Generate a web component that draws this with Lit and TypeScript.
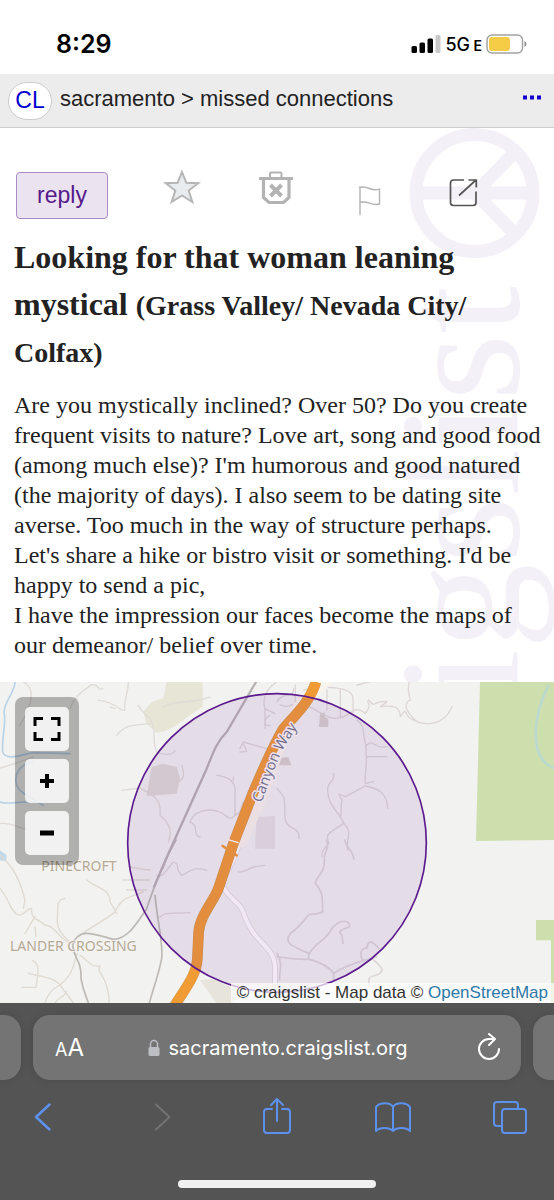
import { LitElement, html, css } from "lit";
import { customElement } from "lit/decorators.js";

@customElement("status-bar")
class StatusBar extends LitElement {
  static styles = css`
    :host {
      display: flex;
      align-items: center;
      justify-content: space-between;
      box-sizing: border-box;
      height: 74px;
      padding: 14px 27px 0 56px;
      background: #fff;
      color: #000;
      font-family: Inter, "Liberation Sans", sans-serif;
    }
    .time { font-size: 25px; font-weight: 600; }
    .right { display: flex; align-items: center; gap: 4px; }
    .network { font-size: 18px; font-weight: 500; }
    .small { font-size: 14px; font-weight: 600; }
    svg { display: block; }
  `;
  render() {
    return html`
      <span class="time">8:29</span>
      <div class="right">
        <svg width="30" height="20" viewBox="0 0 30 20" aria-hidden="true">
          <rect x="0.500" y="12" width="5.500" height="7" rx="1.500" />
          <rect x="8.500" y="8.500" width="5.500" height="10.500" rx="1.500" />
          <rect x="16.500" y="4.500" width="5.500" height="14.500" rx="1.500" />
          <rect x="24.500" y="1" width="5" height="18" rx="1.500" fill="#c8c8c8" />
        </svg>
        <span class="network">5G<span class="small"> E</span></span>
        <svg width="41" height="20" viewBox="0 0 41 20" aria-hidden="true">
          <rect x="1" y="1" width="35.500" height="18" rx="5" fill="none" stroke="#a3a3a3" stroke-width="1.500" />
          <rect x="3" y="3" width="21" height="14" rx="3" fill="#f5cc45" />
          <path d="M38.500 7v6q2-1 2-3t-2-3z" fill="#8c8c8c" />
        </svg>
      </div>
    `;
  }
}

@customElement("site-header")
class SiteHeader extends LitElement {
  static styles = css`
    :host {
      display: flex;
      align-items: center;
      box-sizing: border-box;
      height: 54px;
      padding: 0 13px 0 8px;
      border-bottom: 1px solid #ccc;
      background: #ececec;
      font-family: "Liberation Sans", Arial, sans-serif;
      color: #222;
    }
    .logo {
      display: flex;
      align-items: center;
      justify-content: center;
      box-sizing: border-box;
      width: 44px;
      height: 38px;
      border: 1px solid #ccc;
      border-radius: 20px;
      background: #fff;
      color: #0000d0;
      font-size: 23px;
      text-decoration: none;
    }
    .crumbs { flex: 1; margin: 0 0 4px 8px; font-size: 22px; }
    .menu { padding: 0 0 2px; border: 0; background: none; }
    svg { display: block; }
  `;
  render() {
    return html`
      <a class="logo" href="#home">CL</a>
      <nav class="crumbs">sacramento &gt; missed connections</nav>
      <button class="menu" aria-label="more">
        <svg width="18" height="12" viewBox="0 0 18 12" fill="#1400cf">
          <path d="M0 1.500h4v4H0zM7 1.500h4v4H7zM14 1.500h4v4h-4z" />
        </svg>
      </button>
    `;
  }
}

@customElement("listing-post")
class ListingPost extends LitElement {
  static styles = css`
    :host {
      display: block;
      position: relative;
      overflow: hidden;
      padding: 40px 10px 22px 14px;
      background: #fff;
      color: #222;
      font-family: "Liberation Serif", "Times New Roman", serif;
    }
    .watermark { position: absolute; top: 0; right: 0; }
    .mark { font-family: "Liberation Serif", serif; font-size: 172px; }
    .body { position: relative; }
    .actions { display: flex; align-items: flex-start; padding: 0 34px 0 2px; }
    .reply {
      box-sizing: border-box;
      width: 92px;
      height: 47px;
      margin: 4px 27px 0 0;
      padding: 0;
      border: 1px solid #a98bc7;
      border-radius: 4px;
      background: #ebe3ef;
      color: #551a8b;
      font: 23px "Liberation Sans", Arial, sans-serif;
    }
    .icons { flex: 1; display: grid; grid-template-columns: repeat(4, 1fr); justify-items: center; }
    .icon { padding: 0; border: 0; background: none; }
    svg { display: block; }
    h1 { margin: 15px 0 0; font-size: 32px; line-height: 47px; font-weight: 700; }
    .place { font-size: 28px; line-height: 28px; }
    p { margin: 15px 0 0; font-size: 24px; line-height: 30px; }
  `;
  render() {
    return html`
      <svg class="watermark" width="150" height="554" viewBox="404 128 150 554" fill="#f3f0f7" aria-hidden="true">
        <g fill="none" stroke="#f3f0f7" stroke-width="13">
          <circle cx="474.500" cy="193" r="58.500" />
          <path d="M416 193h117M475 193l40-41M475 193l40 41" />
        </g>
        <text class="mark" text-anchor="end" transform="translate(518 286) rotate(-90)">craigslist</text>
      </svg>
      <div class="body">
        <div class="actions">
          <button class="reply">reply</button>
          <div class="icons">
            <button class="icon" aria-label="favorite">
              <svg width="48" height="48" viewBox="0 0 48 48" fill="#e9ecef" stroke="#b6b6b6" stroke-width="2">
                <path d="M24 4l4.300 10.700 12 .500-9.600 7.300 3.600 11.500-10.300-6.500-10.300 6.500 3.600-11.500-9.600-7.300 12-.500z" />
              </svg>
            </button>
            <button class="icon" aria-label="hide">
              <svg width="48" height="48" viewBox="0 0 48 48" fill="none" stroke="#b3b3b3">
                <path d="M7 10.500h34" stroke-width="3" />
                <path d="M18 9V5.500q0-1 1-1h9.500q1 0 1 1V9" stroke-width="2" />
                <path d="M11.500 11v18.500l5.500 5h14.500l5.500-5V11" stroke-width="3.200" />
                <path d="M18.500 17l11 11m0-11l-11 11" stroke-width="4" />
              </svg>
            </button>
            <button class="icon" aria-label="flag">
              <svg width="48" height="48" viewBox="0 0 48 48" fill="none" stroke="#b3b3b3" stroke-width="1.400">
                <path d="M15 18.500V47M14 19.500c4-1.200 7-.500 10.500 1s6.500 1.700 10 .700V36c-3.500 1-6.500.500-10-.800s-6-1.700-9.500-.700" />
              </svg>
            </button>
            <button class="icon" aria-label="share">
              <svg width="48" height="48" viewBox="0 0 48 48" fill="none" stroke="#555" stroke-width="1.700">
                <path d="M25 12H14.500a3 3 0 0 0-3 3v19.500a3 3 0 0 0 3 3H34a3 3 0 0 0 3-3V23.500M20 27.500L37 12M29.500 12H37.300V19.500" />
              </svg>
            </button>
          </div>
        </div>
        <h1>Looking for that woman leaning mystical <span class="place">(Grass Valley/ Nevada City/ Colfax)</span></h1>
        <p>
          Are you mystically inclined? Over 50? Do you create frequent visits to nature? Love art, song and good food
          (among much else)? I'm humorous and good natured (the majority of days). I also seem to be dating site
          averse. Too much in the way of structure perhaps.<br />
          Let's share a hike or bistro visit or something. I'd be happy to send a pic,<br />
          I have the impression our faces become the maps of our demeanor/ belief over time.
        </p>
      </div>
    `;
  }
}

@customElement("area-map")
class AreaMap extends LitElement {
  static styles = css`
    :host {
      display: block;
      position: relative;
      overflow: hidden;
      background: #f2f2f0;
      font-family: "Liberation Sans", Arial, sans-serif;
    }
    .canvas { display: block; width: 100%; height: 321px; }
    .place { font: 42px "Noto Sans", sans-serif; fill: #b3a994; paint-order: stroke; stroke: #f6f5f2; stroke-width: 5px; }
    .street { font: 44px "Noto Sans", sans-serif; fill: #77708f; paint-order: stroke; stroke: #eee6f0; stroke-width: 8px; }
    .tools {
      position: absolute;
      top: 15px;
      left: 15px;
      display: grid;
      gap: 8px;
      padding: 10px;
      border-radius: 8px;
      background: rgba(0, 0, 0, 0.27);
    }
    .tool {
      display: flex;
      align-items: center;
      justify-content: center;
      width: 44px;
      height: 44px;
      padding: 0;
      border: 0;
      border-radius: 5px;
      background: rgba(255, 255, 255, 0.82);
    }
    .credit {
      position: absolute;
      right: 0;
      bottom: 0;
      padding: 0 6px;
      background: rgba(255, 255, 255, 0.7);
      color: #333;
      font-size: 17px;
      line-height: 20px;
      white-space: nowrap;
    }
    a { color: #2f79a8; text-decoration: none; }
  `;
  render() {
    return html`
      <svg class="canvas" viewBox="0 0 1662 963" preserveAspectRatio="xMidYMid slice" fill="none" stroke-linecap="round" stroke-linejoin="round" role="img" aria-label="map">
        <!-- parks and built-up areas -->
        <path d="M1440 0H1662V474L1428 477zM1608 714H1662V963H1653V775H1608z" fill="#cddfad" />
        <path d="M1645 12C1610 80 1600 150 1612 200C1622 235 1640 250 1662 258" stroke="#bcd9d0" stroke-width="8" />
        <path d="M500 0H608V75C560 100 520 150 470 152L440 125L430 90L455 60L490 48z" fill="#e6e5d6" />
        <path d="M455 255L490 245L530 255L540 290L530 335L440 342z" fill="#dfdbd7" />
        <path d="M770 405L825 402V500H765z" fill="#e6e3e1" />
        <path d="M960 92H975V105L985 110V135H957zM835 228L865 225L874 250H835z" fill="#d8d2cd" />
        <path d="M600 895L640 890L700 920V963H650z" fill="#e7e5db" />
        <path d="M0 505L20 520L18 538L0 535z" fill="#bfd8ea" />
        <!-- streams -->
        <g stroke="#b8d3ea" stroke-width="5">
          <path d="M45 0C45 30 15 55 12 90C20 120 5 160 8 210C20 240 70 215 100 212L210 215M100 240C60 245 45 275 48 300C50 330 90 345 130 370M0 360C30 370 70 355 110 360" />
        </g>
        <!-- minor roads, north west -->
        <g stroke="#dfdbd6" stroke-width="4">
          <path d="M70 0C110 20 95 70 60 130M0 258C50 245 80 230 100 225M0 425C30 420 60 440 75 440M210 80C220 50 240 30 275 8C300 5 290 30 308 20M385 0C385 30 370 60 375 85C360 90 350 60 295 55M345 80L330 75M350 160C380 125 400 130 450 125M415 70C430 100 450 100 455 120C470 150 455 180 470 210C490 220 520 220 525 205M490 75C530 50 560 70 630 45M365 325L420 318C460 340 485 350 480 400C505 420 520 445 505 480M545 250C560 290 540 300 530 300" />
        </g>
        <!-- minor roads, south west -->
        <g stroke="#dfdad2" stroke-width="4" transform="translate(0 474)">
          <path d="M0 45C40 80 60 120 75 180L70 205M0 145C30 180 30 215 55 225C80 225 75 205 95 205C90 240 120 240 135 255C170 260 170 290 210 310M105 230L75 280M105 260L108 290M195 175C165 180 175 210 172 240C170 270 190 290 210 305M260 120C290 145 330 145 330 185L350 220M210 310C250 270 320 240 345 215C370 165 390 175 430 155M440 150L380 150M232 340C215 390 220 400 180 435C150 450 140 470 135 489M85 400C120 410 160 410 180 435L220 489M65 442H108C115 400 120 370 98 362M165 489C175 470 185 480 200 455M240 345C270 370 275 380 300 378C285 400 325 400 328 489M370 120H450M385 80C410 85 440 90 450 90" />
        </g>
        <!-- minor roads inside and around the circle -->
        <g stroke="#dcd7d5" stroke-width="4">
          <path d="M830 0C800 20 785 50 795 80L825 95M795 80V140M720 200L730 180L800 200M720 210L740 208L730 185M650 280C690 285 710 300 705 340V400L720 390L730 360M700 295V285M705 400C690 420 680 400 660 390C620 375 580 390 570 420C600 430 575 460 600 465M810 100C790 110 790 135 810 130" />
          <path d="M470 580C490 590 500 560 520 540C545 550 520 555 545 580C570 570 580 550 620 565M490 560L495 545M480 705C500 690 490 695 570 692M715 570C730 575 750 550 795 550" />
        </g>
        <g stroke="#dcd7d6" stroke-width="4" transform="translate(831 -6)">
          <path d="M0 65C20 30 50 60 50 25M10 75C50 90 40 60 60 80M55 15V70M80 30C140 15 225 20 228 55V100M150 30V90M190 30V110M50 75C100 60 150 130 190 112C220 110 230 70 265 100C290 70 265 70 275 60C300 90 280 60 330 65L310 80C350 75 370 80 370 110C390 80 380 100 400 115C440 140 500 140 525 80M420 125C380 90 380 70 400 60C390 30 395 10 400 0M240 15L280 5M240 120C265 140 255 150 265 190C275 250 260 290 265 310L290 305M265 200C290 170 290 210 330 200M270 230H330M265 318L205 350L185 342L195 360C190 380 195 395 190 410M265 318C300 325 330 335 332 385M170 280C175 310 150 300 152 335C155 380 190 400 200 430C140 470 150 460 155 490C140 510 135 510 135 530M200 430C230 460 205 475 212 510M0 325C30 360 20 350 24 400C20 460 70 430 66 475" />
        </g>
        <g stroke="#dcd6da" stroke-width="5" transform="translate(831 474)">
          <path d="M148 0C160 30 140 30 142 60C145 100 115 110 115 130C140 160 135 170 137 215C120 225 100 220 95 225C80 240 70 260 40 280C20 310 40 315 95 340V358M95 345C110 310 150 300 165 265C190 235 220 240 218 260C190 270 180 275 195 285L198 310M0 350C30 355 50 360 98 358C140 370 160 385 170 400V420M170 400C200 380 230 370 260 362C240 340 260 320 270 325C275 290 290 310 305 325M260 362L300 350M285 355C310 380 330 390 300 405C275 410 270 415 280 440M203 0C210 30 230 30 230 58M0 340C20 370 5 400 8 420" />
        </g>
        <!-- local road, railway and motorway -->
        <path d="M718 480C700 560 665 575 668 615C700 665 720 655 735 705C765 790 830 790 825 870V910" stroke="#e2dce0" stroke-width="17" />
        <path d="M718 480C700 560 665 575 668 615C700 665 720 655 735 705C765 790 830 790 825 870V910" stroke="#fff" stroke-width="12" />
        <path d="M830 190L895 75L975 0M725 480L790 330L840 190" stroke="#faf5ec" stroke-width="34" />
        <path d="M528 474C490 540 460 620 440 680C400 740 380 770 340 772C290 760 235 730 218 790C220 830 245 830 243 890C250 930 260 945 265 963M465 640C475 740 490 780 485 830C475 880 460 920 448 963" stroke="#bdbab5" stroke-width="5" />
        <path d="M768 0L680 150C650 180 640 210 620 260L505 515L462 615" stroke="#b8b3b3" stroke-width="7" />
        <path d="M948 0C930 60 885 100 850 140C815 200 790 260 760 330L700 485L655 620C640 660 600 700 596 750L592 830C590 880 555 920 515 985" stroke="#cf9a55" stroke-width="32" stroke-linecap="butt" />
        <path d="M948 0C930 60 885 100 850 140C815 200 790 260 760 330L700 485L655 620C640 660 600 700 596 750L592 830C590 880 555 920 515 985" stroke="#f19b35" stroke-width="29" stroke-linecap="butt" />
        <path d="M668 492L710 520" stroke="#f19b35" stroke-width="8" />
        <path d="M684 473L715 482" stroke="#fff" stroke-width="4" />
        <!-- approximate location -->
        <circle cx="831" cy="483" r="448" fill="#702090" fill-opacity="0.1" stroke="#5b1a8e" stroke-width="5" />
        <text class="place" x="124" y="568">PINECROFT</text>
        <text class="place" x="30" y="808">LANDER CROSSING</text>
        <path id="street" d="M784 364C806 306 824 256 842 216C862 176 886 146 921 96" />
        <text class="street"><textPath href="#street">Canyon Way</textPath></text>
      </svg>
      <div class="tools">
        <button class="tool" aria-label="full screen">
          <svg width="28" height="24" viewBox="0 0 28 24" fill="none" stroke="#000" stroke-width="3">
            <path d="M2 9V1.500H10M18 1.500H26V9M26 15V22.500H18M10 22.500H2V15" />
          </svg>
        </button>
        <button class="tool" aria-label="zoom in">
          <svg width="14" height="14" viewBox="0 0 14 14" stroke="#000" stroke-width="4"><path d="M0 7H14M7 0V14" /></svg>
        </button>
        <button class="tool" aria-label="zoom out">
          <svg width="14" height="14" viewBox="0 0 14 14" stroke="#000" stroke-width="5"><path d="M0 7H14" /></svg>
        </button>
      </div>
      <div class="credit">© craigslist - Map data © <a href="#osm">OpenStreetMap</a></div>
    `;
  }
}

@customElement("browser-bar")
class BrowserBar extends LitElement {
  static styles = css`
    :host {
      display: flex;
      flex-direction: column;
      box-sizing: border-box;
      padding: 12px 0;
      background: #545454;
      font-family: Inter, "Liberation Sans", sans-serif;
    }
    .tabs { display: grid; grid-template-columns: 21px 1fr 21px; gap: 12px; height: 65px; }
    .side, .address { background: #747474; box-shadow: 0 0 8px rgba(0, 0, 0, 0.12); }
    .prev { border-radius: 0 17px 17px 0; }
    .next { border-radius: 17px 0 0 17px; }
    .address {
      display: flex;
      align-items: center;
      justify-content: space-between;
      padding: 0 20px 0 22px;
      border-radius: 17px;
    }
    button { padding: 0; border: 0; background: none; color: #fff; font-family: inherit; }
    .size { font-size: 18px; }
    .big { font-size: 24px; }
    .url { display: flex; align-items: center; gap: 9px; padding-right: 4px; font-size: 20px; }
    svg { display: block; }
    .toolbar { display: flex; justify-content: space-between; padding: 12px 24px 0 23px; }
    .toolbar svg { fill: none; stroke: #5c91ee; stroke-width: 2; stroke-linecap: round; stroke-linejoin: round; }
    .toolbar .off { stroke: #737373; }
    .home { width: 198px; height: 8px; margin: auto auto 0; border-radius: 4px; background: #f0f0f0; }
  `;
  render() {
    return html`
      <div class="tabs">
        <div class="side prev"></div>
        <div class="address">
          <button class="size" aria-label="page settings">A<span class="big">A</span></button>
          <button class="url">
            <svg width="12" height="18" viewBox="0 0 12 18" aria-hidden="true">
              <rect x="0.500" y="8" width="11" height="9" rx="1.500" fill="#bdbdc4" />
              <path d="M2.500 8V5a3.500 3.500 0 0 1 7 0V8" fill="none" stroke="#bdbdc4" stroke-width="1.500" />
            </svg>
            sacramento.craigslist.org
          </button>
          <button aria-label="reload">
            <svg width="26" height="30" viewBox="0 0 26 30" fill="none" stroke="#fff" stroke-width="2" stroke-linecap="round" stroke-linejoin="round">
              <path d="M24 16a10 10 0 1 1-10-10h5M14 1l6 5-6 6" />
            </svg>
          </button>
        </div>
        <div class="side next"></div>
      </div>
      <div class="toolbar">
        <button aria-label="back">
          <svg width="40" height="44" viewBox="0 0 40 44"><path d="M26.500 12.500L13 25l13.500 12.500" stroke-width="2.500" /></svg>
        </button>
        <button aria-label="forward">
          <svg class="off" width="40" height="44" viewBox="0 0 40 44"><path d="M16 12.500L29.500 25 16 37.500" /></svg>
        </button>
        <button aria-label="share">
          <svg width="40" height="44" viewBox="0 0 40 44">
            <path d="M15 17h-5a3 3 0 0 0-3 3v18a3 3 0 0 0 3 3h20a3 3 0 0 0 3-3V20a3 3 0 0 0-3-3h-5M20 29V8M14 13l6-6 6 6" />
          </svg>
        </button>
        <button aria-label="bookmarks">
          <svg width="40" height="44" viewBox="0 0 40 44">
            <path d="M20 15c-3-5-13-5-17 0v24c4-4 13-4 17 0 4-4 13-4 17 0V15c-4-5-14-5-17 0zV39" />
          </svg>
        </button>
        <button aria-label="tabs">
          <svg width="40" height="44" viewBox="0 0 40 44">
            <path d="M28 16v-3a3 3 0 0 0-3-3H7a3 3 0 0 0-3 3v18a3 3 0 0 0 3 3h5" />
            <rect x="12" y="17" width="24" height="24" rx="3" />
          </svg>
        </button>
      </div>
      <div class="home"></div>
    `;
  }
}

@customElement("app-root")
class AppRoot extends LitElement {
  static styles = css`
    :host { display: flex; flex-direction: column; min-height: 100vh; background: #fff; }
    .browser { flex: 1; }
  `;
  render() {
    return html`
      <status-bar></status-bar>
      <site-header></site-header>
      <listing-post></listing-post>
      <area-map></area-map>
      <browser-bar class="browser"></browser-bar>
    `;
  }
}
